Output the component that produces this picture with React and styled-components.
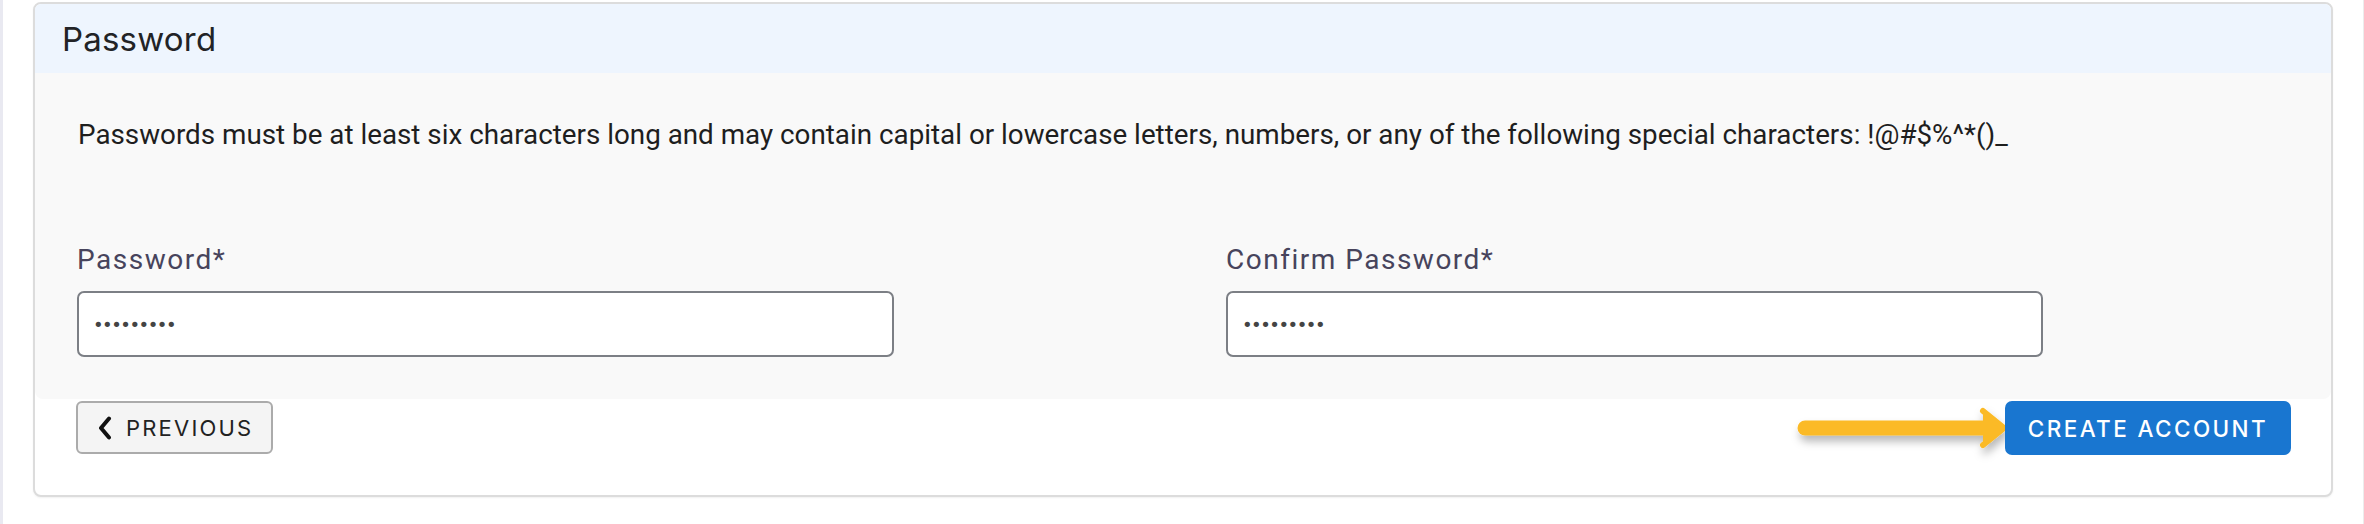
import React from "react";
import styled, { createGlobalStyle } from "styled-components";

const Global = createGlobalStyle`
  html, body { margin: 0; padding: 0; background: #ffffff; }
  * { box-sizing: border-box; }
`;

const Page = styled.div`
  width: 2364px;
  height: 524px;
  background: #ffffff;
  border-left: 3px solid #e9e9f1;
  border-right: 1px solid #ececec;
  padding: 2px 30px 0 30px;
`;

const Card = styled.section`
  width: 2300px;
  border: 2px solid #dcdcdc;
  border-radius: 8px;
  background: #ffffff;
  box-shadow: 0 1px 2px rgba(0, 0, 0, 0.06);
  overflow: hidden;
`;

const Header = styled.header`
  height: 69px;
  background: #eef5fe;
  display: flex;
  align-items: center;
  padding-left: 27px;
  font-family: Inter, "Open Sans", sans-serif;
  font-size: 33px;
  color: #222326;
  letter-spacing: 0.2px;
`;

const Body = styled.div`
  background: #f9f9f9;
  border-radius: 0 0 8px 8px;
  padding: 0 42px 42px 42px;
`;

const Notice = styled.p`
  margin: 0;
  padding: 43px 0 0 1px;
  height: 172px;
  font-family: Roboto, "Liberation Sans", sans-serif;
  font-size: 27.8px;
  line-height: 38px;
  color: #1e1e1e;
`;

const Fields = styled.div`
  display: grid;
  grid-template-columns: 1149px 1fr;
`;

const Field = styled.label`
  display: flex;
  flex-direction: column;
  gap: 16px;
`;

const LabelText = styled.span`
  font-family: Roboto, "Liberation Sans", sans-serif;
  font-size: 28px;
  line-height: 30px;
  letter-spacing: 1.5px;
  color: #47445c;
`;

const Input = styled.input`
  width: 817px;
  height: 66px;
  border: 2px solid #7c7f85;
  border-radius: 7px;
  background: #ffffff;
  padding: 0 14px;
  font-family: "DejaVu Sans", sans-serif;
  font-size: 18px;
  letter-spacing: -1.5px;
  color: #444444;
  outline: none;
`;

const Footer = styled.footer`
  display: flex;
  align-items: flex-start;
  justify-content: space-between;
  padding: 2px 40px 40px 41px;
`;

const PrevButton = styled.button`
  display: flex;
  align-items: center;
  gap: 14px;
  height: 53px;
  width: 197px;
  padding: 0 0 0 20px;
  border: 2px solid #ababab;
  border-radius: 6px;
  background: #f4f4f4;
  font-family: Inter, "Open Sans", sans-serif;
  font-size: 22px;
  letter-spacing: 2.2px;
  color: #222222;
  cursor: pointer;
`;

const RightGroup = styled.div`
  display: flex;
  align-items: center;
`;

const Arrow = styled.svg`
  width: 212px;
  height: 54px;
  margin-right: -4px;
  overflow: visible;
`;

const CreateButton = styled.button`
  height: 54px;
  width: 286px;
  border: none;
  border-radius: 7px;
  background: #1976d0;
  color: #ffffff;
  font-family: Inter, "Open Sans", sans-serif;
  font-size: 22.5px;
  font-weight: 500;
  letter-spacing: 2.4px;
  cursor: pointer;
`;

export default function App() {
  return (
    <>
      <Global />
      <Page>
        <Card>
          <Header>Password</Header>
          <Body>
            <Notice>
              Passwords must be at least six characters long and may contain capital or lowercase letters, numbers, or any of the following special characters: !@#$%^*()_
            </Notice>
            <Fields>
              <Field>
                <LabelText>Password*</LabelText>
                <Input type="password" readOnly value="123456789" />
              </Field>
              <Field>
                <LabelText>Confirm Password*</LabelText>
                <Input type="password" readOnly value="123456789" />
              </Field>
            </Fields>
          </Body>
          <Footer>
            <PrevButton>
              <svg width="14" height="24" viewBox="0 0 14 24" aria-hidden="true">
                <path d="M11 2.5 L3 12 L11 21.5" fill="none" stroke="#111" strokeWidth="4" strokeLinecap="round" strokeLinejoin="round" />
              </svg>
              PREVIOUS
            </PrevButton>
            <RightGroup>
              <Arrow viewBox="0 0 212 54" aria-hidden="true">
                <defs>
                  <filter id="arrowShadow" x="-10%" y="-40%" width="120%" height="200%">
                    <feDropShadow dx="2" dy="6" stdDeviation="4" floodColor="#000" floodOpacity="0.28" />
                  </filter>
                </defs>
                <g filter="url(#arrowShadow)">
                  <path d="M8 27 L186 27" stroke="#fbba26" strokeWidth="15" strokeLinecap="round" />
                  <path d="M186 10 L207 27 L186 44" fill="#fbba26" stroke="#fbba26" strokeWidth="6" strokeLinejoin="round" strokeLinecap="round" />
                </g>
              </Arrow>
              <CreateButton>CREATE ACCOUNT</CreateButton>
            </RightGroup>
          </Footer>
        </Card>
      </Page>
    </>
  );
}
